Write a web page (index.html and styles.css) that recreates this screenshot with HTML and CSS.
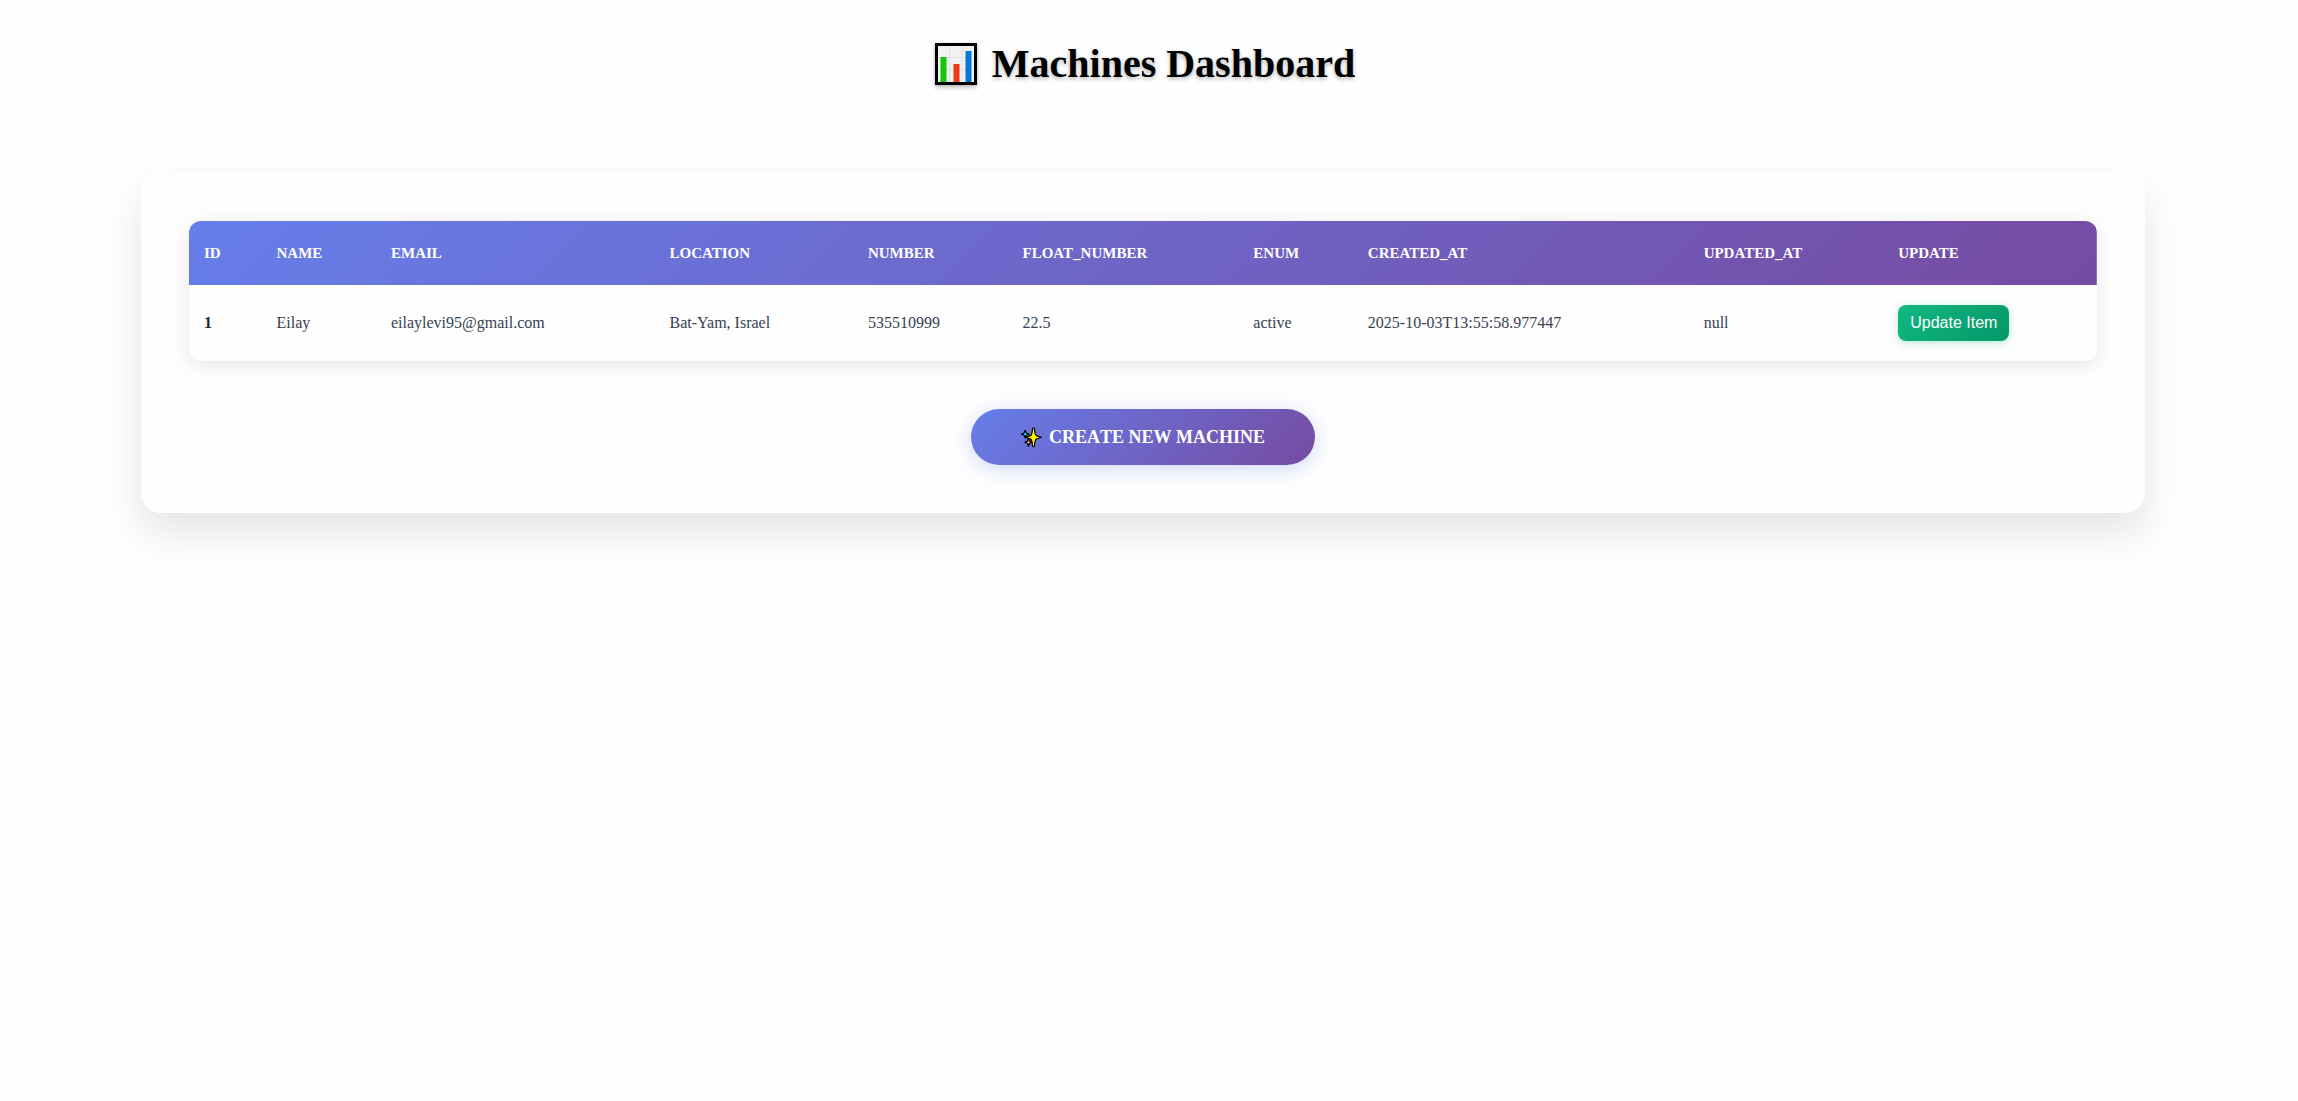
FILE: index.html
```html
<!DOCTYPE html>
<html lang="en">
<head>
<meta charset="utf-8">
<title>Machines Dashboard</title>
<link rel="stylesheet" href="styles.css">
</head>
<body>
<h1 class="title">
  <svg class="title-icon" viewBox="0 0 42 42" aria-hidden="true">
    <path fill="#000" d="M0 0h42v42H0z"/>
    <path fill="#f2f2f2" d="M3 3h36v36H3z"/>
    <path fill="none" stroke="#dfdfdf" d="M14.500 3v36M27 3v36M3 14.500h36M3 27h36"/>
    <path fill="#16c60c" d="M5.500 14h6v25h-6z"/>
    <path fill="#f03a17" d="M18.500 21h6v18h-6z"/>
    <path fill="#0078d7" d="M30.500 8h6v31h-6z"/>
  </svg>
  <span>Machines Dashboard</span>
</h1>
<main class="card">
  <table class="machines">
    <thead>
      <tr>
        <th class="col-id">ID</th><th class="col-name">Name</th><th class="col-email">Email</th><th class="col-location">Location</th><th class="col-number">Number</th><th class="col-float">Float_Number</th><th class="col-enum">Enum</th><th class="col-created">Created_At</th><th class="col-updated">Updated_At</th><th>Update</th>
      </tr>
    </thead>
    <tbody>
      <tr>
        <td class="id">1</td><td>Eilay</td><td>eilaylevi95@gmail.com</td><td>Bat-Yam, Israel</td><td>535510999</td><td>22.5</td><td>active</td><td>2025-10-03T13:55:58.977447</td><td>null</td><td><button class="update" type="button">Update Item</button></td>
      </tr>
    </tbody>
  </table>
  <button class="create" type="button">
    <svg class="sparkles" viewBox="0 0 21 21" aria-hidden="true">
      <g stroke="#000" stroke-width="1.200" stroke-linejoin="round">
        <path fill="#3fd8ee" d="M4.200 3.200 5.300 6 8 7.100 5.300 8.200 4.200 11 3.100 8.200.6 7.100 3.100 6z"/>
        <path fill="#f29bb0" d="M7.500 11.500 8.600 14.100 11.200 15.200 8.600 16.300 7.500 19.300 6.400 16.300 3.800 15.200 6.400 14.100z"/>
        <path fill="#fff100" d="M12.500.8Q13.500.8 13.600 2.500 13.900 7.600 15.400 8.600L20.300 10.300 15.400 12Q13.900 13 13.600 18 13.500 19.800 12.500 19.800 11.500 19.800 11.400 18 11.100 13 9.600 12L4.900 10.300 9.600 8.600Q11.100 7.600 11.400 2.500 11.500.8 12.500.8z"/>
      </g>
    </svg>
    <span>Create New Machine</span>
  </button>
</main>
</body>
</html>
```
FILE: styles.css
```css
* {
  box-sizing: border-box;
}

body {
  margin: 0;
  padding: 32px 153px 48px 141px;
  background: #fefefe;
  font-family: "Liberation Serif", "Times New Roman", serif;
  font-size: 16px;
}

.title {
  display: flex;
  align-items: center;
  justify-content: center;
  gap: 15px;
  margin: 0 0 78px;
  padding-left: 4px;
  font-size: 40px;
  line-height: 63px;
  color: #000;
  text-shadow: 0 2px 4px rgba(0, 0, 0, 0.3);
}

.title-icon {
  width: 42px;
  height: 42px;
  filter: drop-shadow(0 2px 2px rgba(0, 0, 0, 0.3));
}

.card {
  display: flex;
  flex-direction: column;
  align-items: center;
  gap: 48px;
  padding: 48px;
  border-radius: 20px;
  background: #fefefe;
  box-shadow: 0 20px 40px rgba(0, 0, 0, 0.1);
}

.machines {
  width: 100%;
  table-layout: fixed;
  border-spacing: 0;
  border-radius: 12px;
  overflow: hidden;
  box-shadow: 0 4px 20px rgba(0, 0, 0, 0.1);
}

.machines thead {
  background: linear-gradient(135deg, #667eea 0%, #764ba2 100%);
}

.machines th {
  padding: 20px 15px;
  font-size: 15px;
  line-height: 24px;
  text-align: left;
  text-transform: uppercase;
  color: #fff;
}

.machines td {
  padding: 20px 15px;
  color: #374151;
}

.machines .id {
  font-weight: bold;
  color: #1f2937;
}

.col-id {
  width: 3.8%;
}

.col-name,
.col-enum {
  width: 6%;
}

.col-email {
  width: 14.6%;
}

.col-location {
  width: 10.4%;
}

.col-number {
  width: 8.1%;
}

.col-float {
  width: 12.1%;
}

.col-created {
  width: 17.6%;
}

.col-updated {
  width: 10.2%;
}

.update,
.create {
  border: 0;
  color: #fff;
  cursor: pointer;
}

.update {
  display: block;
  padding: 8px 12px;
  border-radius: 8px;
  background: linear-gradient(135deg, #10b981 0%, #059669 100%);
  box-shadow: 0 2px 8px rgba(16, 185, 129, 0.3);
  font: 16px/20px "Liberation Sans", Arial, sans-serif;
}

.create {
  display: flex;
  align-items: center;
  gap: 7px;
  padding: 14px 50px;
  border-radius: 28px;
  background: linear-gradient(135deg, #667eea 0%, #764ba2 100%);
  box-shadow: 0 4px 20px rgba(102, 126, 234, 0.3);
  font: bold 18px/28px "Liberation Serif", "Times New Roman", serif;
  font-kerning: none;
  text-transform: uppercase;
}

.sparkles {
  width: 21px;
  height: 21px;
}
```
